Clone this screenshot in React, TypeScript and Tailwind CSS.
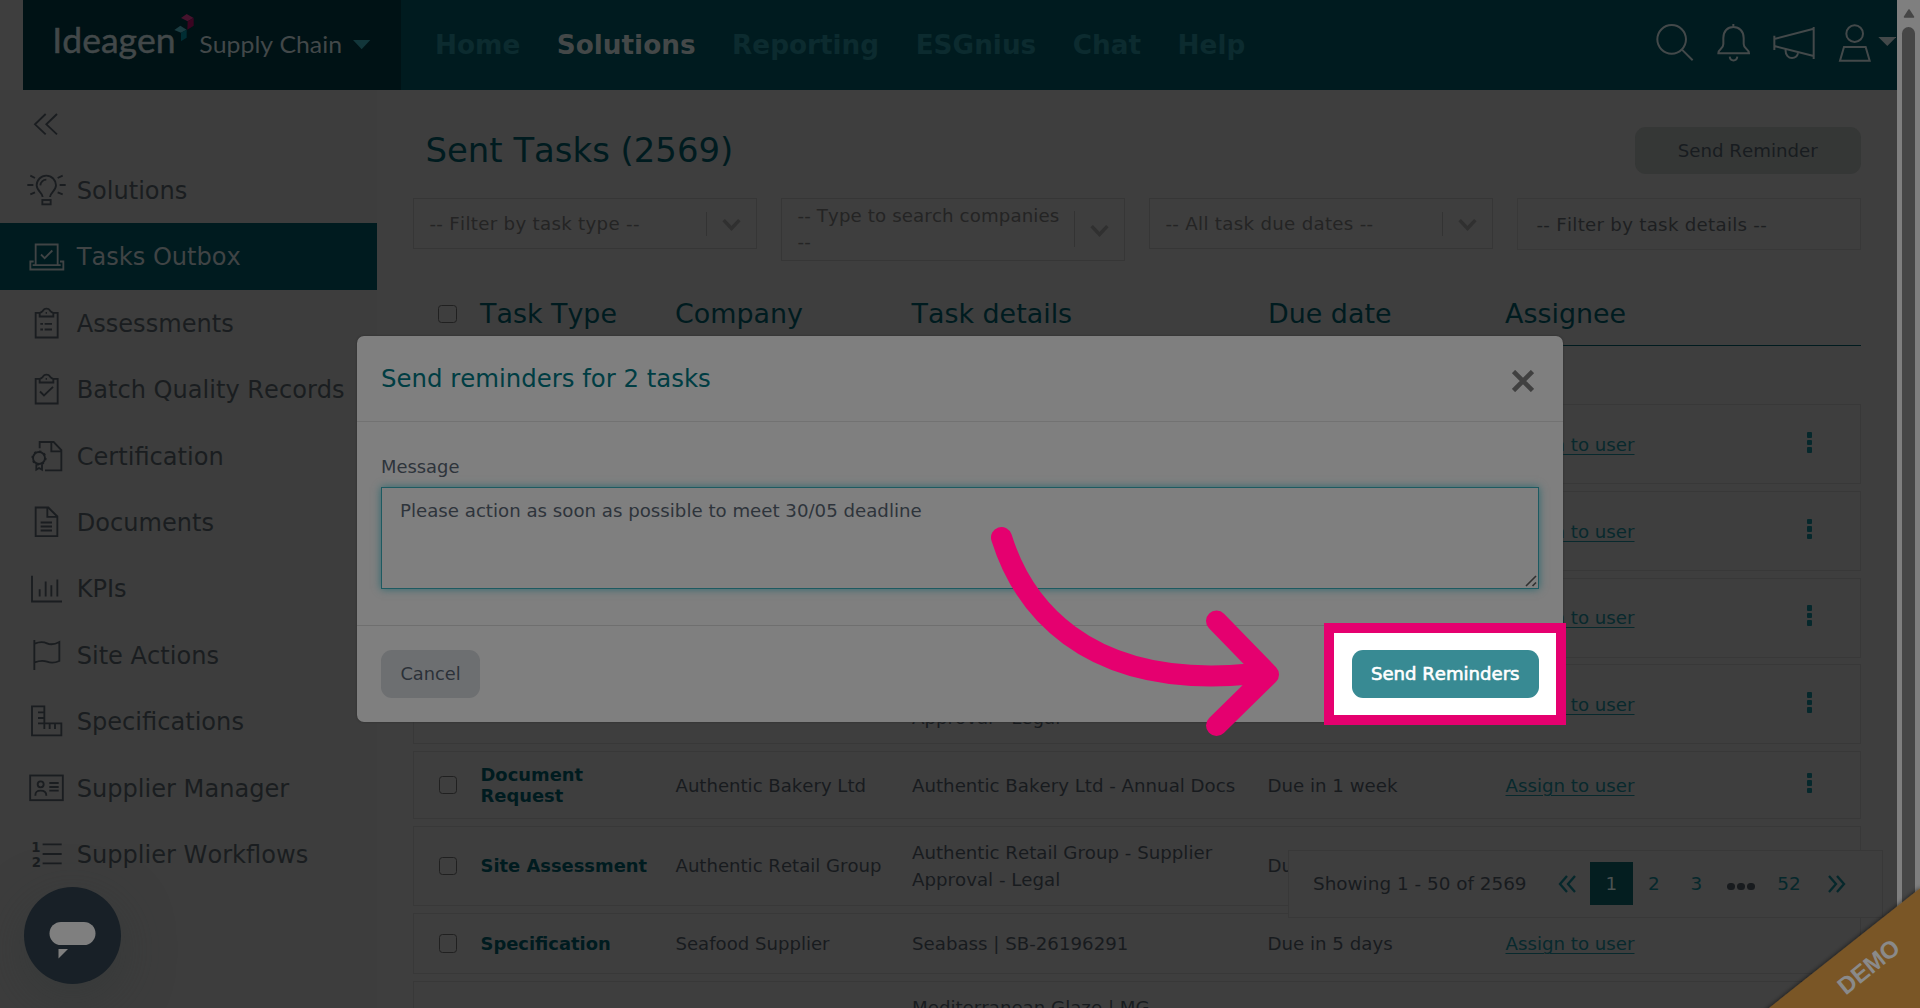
import type { ReactNode } from "react";

function Glyph({ box, w, h, children, sw = 5.5 }: { box: string; w: number; h: number; children: ReactNode; sw?: number }) {
  return (
    <svg viewBox={box} width={w} height={h} fill="none" stroke="currentColor" strokeWidth={sw} className="shrink-0">
      {children}
    </svg>
  );
}

const clip = "M118 218h-12v74h66v-74h-12M118 229v-10c4-3 8-3 11-9 3-6 16-6 19 0 3 6 7 6 11 9v10z";

const menu: { label: string; box: string; icon: ReactNode; active?: boolean }[] = [
  {
    label: "Solutions",
    box: "80 510 120 120",
    icon: (
      <>
        <path d="M127 591c0-12-18-18-18-35a29 29 0 0 1 58 0c0 17-18 23-18 35M120 556a18 18 0 0 1 18-17" />
        <path d="M81 555h18M178 555h18M90 527l14 7M172 534l15-7M90 583l14-6M172 577l15 6" />
        <rect x="126" y="600" width="25" height="13" />
      </>
    ),
  },
  {
    label: "Tasks Outbox",
    box: "80 -10.5 120 120",
    active: true,
    icon: <path d="M106 74V12h66v62M100 63H90v24h99V63h-10M97 74h84M122 42l11 11 23-23" />,
  },
  {
    label: "Assessments",
    box: "80 188.5 120 120",
    icon: (
      <>
        <path d={clip} />
        <path d="M120 251h8M120 268h8M133 251h22M133 268h22M136 218h4" />
      </>
    ),
  },
  {
    label: "Batch Quality Records",
    box: "80 188.5 120 120",
    icon: (
      <>
        <path d={clip} />
        <path d="M119 256l12 12 27-26M136 218h4" />
      </>
    ),
  },
  {
    label: "Certification",
    box: "80 587 120 120",
    icon: (
      <>
        <path d="M118 624v-19h42l23 24v61h-49M153 605v28h30M108 672v16l8-5 9 5v-16" />
        <circle cx="116" cy="653" r="18" />
        <circle cx="116" cy="653" r="20" strokeDasharray="6 9.7" />
      </>
    ),
  },
  {
    label: "Documents",
    box: "80 786.5 120 120",
    icon: <path d="M106 803h38l27 27v59h-65zM141 803v28h30M121 848h34M121 860h34M121 872h34" />,
  },
  {
    label: "KPIs",
    box: "80 25.5 120 120",
    icon: <path d="M95 46v77h90M118 86v22M136 63v45M153 74v34M171 57v51" />,
  },
  {
    label: "Site Actions",
    box: "80 225 120 120",
    icon: <path d="M102 240v90M103 251c17-7 26-6 37-1s22 4 37-4v57c-14 6-26 6-37 2s-20-4-37 2" />,
  },
  {
    label: "Specifications",
    box: "80 424 120 120",
    icon: <path d="M95 440h37v51h51v36H95zM113 458h19M113 475h19M113 491h19M132 491v17M148 491v17M164 491v17" />,
  },
  {
    label: "Supplier Manager",
    box: "80 623 120 120",
    icon: (
      <>
        <rect x="89.500" y="645.500" width="98" height="74" />
        <circle cx="121" cy="672" r="9" />
        <path d="M105 706c0-12 5-15 16-15s17 3 17 15M147 668h28M147 680h28M147 691h28" />
      </>
    ),
  },
  {
    label: "Supplier Workflows",
    box: "80 822 120 120",
    icon: (
      <>
        <path d="M127 853h57M127 882h57M127 910h57" />
        <g fill="currentColor" stroke="none" fontFamily="DejaVu Sans" fontWeight="bold" fontSize="40">
          <text x="93" y="876">1</text>
          <text x="94" y="921">2</text>
        </g>
      </>
    ),
  },
];

function Sidebar() {
  return (
    <nav className="flex w-[377px] shrink-0 flex-col bg-[#3d3d3d] text-[24.100px] text-[#1a1d20]">
      <div className="flex h-[67px] shrink-0 items-center pt-px pl-[26.700px]">
        <Glyph box="80 311 120 120" w={40} h={40}>
          <path d="M136 341l-32 31 32 30M170 341l-32 31 32 30" />
        </Glyph>
      </div>
      {menu.map((m) => (
        <div
          key={m.label}
          className={
            "flex h-[66.420px] shrink-0 items-center gap-[10px] pl-[26.700px] whitespace-nowrap " +
            (m.active ? "bg-[#001b1f] text-[#404445]" : "")
          }
        >
          <Glyph box={m.box} w={40} h={40}>{m.icon}</Glyph>
          <span className="pt-[1.500px]">{m.label}</span>
        </div>
      ))}
    </nav>
  );
}

function Logo() {
  return (
    <svg viewBox="69 0 1134 270" width="378" height="90">
      <g fontFamily="Lato" fill="#424849">
        <text x="157" y="158" fontSize="104" textLength="370" lengthAdjust="spacingAndGlyphs" stroke="#424849" strokeWidth="1.5">Ideagen</text>
        <text x="598" y="158" fontSize="72" textLength="428" lengthAdjust="spacingAndGlyphs">Supply Chain</text>
      </g>
      <path d="M560 42l21 12-18 10-20-10z" fill="#46132d" />
      <path d="M563 64l18-10v23l-19 12z" fill="#3a0521" />
      <path d="M541 77l19 12-17 9-20-8z" fill="#1b3c41" />
      <path d="M543 98l17-9v24l-17 11z" fill="#002d33" />
      <path d="M1059 120h52l-26 28z" fill="#12363a" />
    </svg>
  );
}

function Header() {
  return (
    <header className="flex h-[90px] shrink-0 pl-[23px]">
      <div className="flex flex-1 bg-[#001b1f]">
        <div className="w-[378px] bg-[#001215]">
          <Logo />
        </div>
        <div className="flex flex-1 items-center gap-[36.500px] pt-[2px] pl-[34px] text-[26.300px] font-bold text-[#0c2b2f]">
          <span>Home</span>
          <span className="text-[#444848]">Solutions</span>
          <span>Reporting</span>
          <span>ESGnius</span>
          <span>Chat</span>
          <span>Help</span>
        </div>
        <div className="flex items-center pr-px text-[#43494a]">
          <Glyph box="160 60 130 150" w={43.3} h={50} sw={6}>
            <circle cx="216" cy="118" r="43" />
            <path d="M247 149l32 32" />
          </Glyph>
          <div className="w-[18.300px]" />
          <Glyph box="345 60 110 150" w={36.7} h={50} sw={6}>
            <path d="M400 72v9M355 160c0-14 15-12 15-28v-18c0-20 12-33 30-33s31 13 31 33v18c0 16 16 14 16 28zM389 170c2 15 21 15 23 0" />
          </Glyph>
          <div className="w-[19.300px]" />
          <Glyph box="513 60 137 150" w={45.7} h={50} sw={6}>
            <path d="M523 107v43M641 81v96M523 117l118-31M523 138l118 30M557 148c-2 17 9 26 19 26s16-6 18-14" />
          </Glyph>
          <div className="w-5" />
          <Glyph box="710 60 105 150" w={35} h={50} sw={6}>
            <circle cx="763" cy="101" r="25" />
            <path d="M731 141h65l12 41h-89z" />
          </Glyph>
          <div className="w-1.5" />
          <Glyph box="833 60 55 150" w={18.3} h={50} sw={0}>
            <path d="M834 111h54l-27 27z" fill="currentColor" />
          </Glyph>
        </div>
      </div>
    </header>
  );
}

function Select({ children, tall }: { children: ReactNode; tall?: boolean }) {
  return (
    <div
      className={
        "flex items-center border-[1.500px] border-[#363636] pl-[15.500px] leading-[26.500px] text-[#242424] " +
        (tall ? "h-[62.500px] text-[18.200px] tracking-[0.120px]" : "h-[51px] text-[18.200px] tracking-[0.300px]")
      }
    >
      <span className={"flex-1 " + (tall ? "" : "pt-[2px]")}>{children}</span>
      <span className={"w-[1.500px] bg-[#333333] " + (tall ? "h-[36px]" : "h-[24px]")} />
      <svg viewBox="0 0 50 50" width="49" height="49" fill="none" stroke="#303030" strokeWidth="3.5">
        <path d="M17 21.500l8 8.500 8-8.500" />
      </svg>
    </div>
  );
}

function Check() {
  return <span className="block size-[18.500px] rounded-[3.500px] border-[1.500px] border-[#202020]" />;
}

type Task = { type?: string; company?: string; details: string; due?: string; h: string; dots?: boolean };
const retail = "Authentic Retail Group";
const approval = "Authentic Retail Group - Supplier Approval - Legal";
const tasks: Task[] = [
  { type: "Site Assessment", company: retail, details: approval, due: "Due in 1 week", h: "h-[80px]", dots: true },
  { type: "Site Assessment", company: retail, details: approval, due: "Due in 1 week", h: "h-[80px]", dots: true },
  { type: "Site Assessment", company: retail, details: approval, due: "Due in 1 week", h: "h-[80px]", dots: true },
  { type: "Site Assessment", company: retail, details: approval, due: "Due in 1 week", h: "h-[80px]", dots: true },
  { type: "Document Request", company: "Authentic Bakery Ltd", details: "Authentic Bakery Ltd - Annual Docs", due: "Due in 1 week", h: "h-[68.500px]", dots: true },
  { type: "Site Assessment", company: retail, details: approval, due: "Due in 5 days", h: "h-[80px]" },
  { type: "Specification", company: "Seafood Supplier", details: "Seabass | SB-26196291", due: "Due in 5 days", h: "h-[61.800px]" },
  { details: "Mediterranean Glaze | MG-", h: "h-[54px]" },
];

function Row({ t }: { t: Task }) {
  return (
    <div
      className={
        "grid shrink-0 grid-cols-[42px_195px_236.500px_355.500px_238px_1fr] items-center border-[1.500px] border-[#383838] pl-[24.500px] leading-[27px] text-[#181b1e] " +
        t.h
      }
    >
      {t.type ? <Check /> : <span />}
      <b className="w-[172px] text-[17.900px] leading-[21px] whitespace-normal text-[#001b1f]">{t.type}</b>
      <span className="text-[18.100px]">{t.company}</span>
      <span className="w-[328px]">{t.details}</span>
      <span>{t.due}</span>
      {t.type && (
        <span className="flex items-center">
          <span className="w-[301px] text-[#08292d] underline decoration-[1.200px] underline-offset-[2.500px]">Assign to user</span>
          {t.dots && (
            <span className="-mt-1 flex flex-col gap-[2px]">
              <i className="size-[5.500px] rounded-[1px] bg-[#06282c]" />
              <i className="size-[5.500px] rounded-[1px] bg-[#06282c]" />
              <i className="size-[5.500px] rounded-[1px] bg-[#06282c]" />
            </span>
          )}
        </span>
      )}
    </div>
  );
}

function Main() {
  return (
    <main className="flex h-[918px] flex-1 flex-col overflow-hidden pr-[36px] pl-[36px] text-[18.200px]">
      <div className="flex h-[108px] shrink-0 items-start justify-between">
        <h1 className="pt-[37px] pl-[12.500px] text-[33.900px] leading-[48px] text-[#001b1f]">Sent Tasks (2569)</h1>
        <button className="mt-[37px] h-[47px] w-[226.500px] rounded-[11px] bg-[#353736] text-[#181c20]">Send Reminder</button>
      </div>
      <div className="grid h-[62.500px] shrink-0 grid-cols-4 items-start gap-6 whitespace-nowrap">
        <Select>-- Filter by task type --</Select>
        <Select tall>-- Type to search companies<br />--</Select>
        <Select>-- All task due dates --</Select>
        <div className="flex h-[52px] items-center border-[1.500px] border-[#383838] pt-[2px] pl-[18.500px] tracking-[0.280px] text-[#1d1f21]">
          -- Filter by task details --
        </div>
      </div>
      <div className="mt-[20px] grid h-[65.800px] shrink-0 grid-cols-[42px_195px_236.500px_356.500px_237px_1fr] items-center border-b-[1.500px] border-[#001b1f] pt-[2px] pl-[25px] text-[26.900px] whitespace-nowrap text-[#001b1f]">
        <Check />
        <span>Task Type</span>
        <span>Company</span>
        <span>Task details</span>
        <span>Due date</span>
        <span>Assignee</span>
      </div>
      <div className="mt-[58.200px] flex flex-col gap-[6.600px]">
        {tasks.map((t, i) => (
          <Row key={i} t={t} />
        ))}
      </div>
    </main>
  );
}

function Pagination() {
  return (
    <div className="absolute top-[849.500px] left-[1288px] flex h-[68px] w-[595px] items-center border-[1.500px] border-[#383838] bg-[#3e3e3e] text-[18.400px] text-[#06282c]">
      <span className="w-[269px] shrink-0 pt-px pl-[24px] whitespace-nowrap text-[#181b1e]">Showing 1 - 50 of 2569</span>
      <svg viewBox="0 0 20 20" width="20" height="20" fill="none" stroke="currentColor" strokeWidth="2.3"><path d="M9 2L2 10l7 8M17 2l-7 8 7 8" /></svg>
      <span className="ml-[12px] flex h-[42.500px] w-[42.500px] items-center justify-center bg-[#041e20] pt-px text-[#4a5151]">1</span>
      <span className="w-[42.500px] pt-px text-center">2</span>
      <span className="w-[42.500px] pt-px text-center">3</span>
      <span className="flex w-[47px] items-center justify-center gap-[2.500px] pt-1.5">
        <i className="size-[7.500px] rounded-full bg-[#181b1e]" />
        <i className="size-[7.500px] rounded-full bg-[#181b1e]" />
        <i className="size-[7.500px] rounded-full bg-[#181b1e]" />
      </span>
      <span className="w-[49px] pt-px text-center">52</span>
      <svg viewBox="0 0 20 20" width="20" height="20" fill="none" stroke="currentColor" strokeWidth="2.3" className="ml-[13px]"><path d="M2 2l7 8-7 8M10 2l7 8-7 8" /></svg>
    </div>
  );
}

function Modal() {
  return (
    <section className="absolute top-[336px] left-[357px] flex h-[385.500px] w-[1206px] flex-col rounded-[7px] bg-[#7f7f7f] text-[18.180px] text-[#2e343b] shadow-[0_0_2px_#2a2a2a]">
      <div className="flex h-[86px] shrink-0 items-center justify-between border-b-[1.500px] border-[#727272] pr-[29.500px] pl-[24px]">
        <h2 className="pt-[2px] text-[24.400px] text-[#003d43]">Send reminders for 2 tasks</h2>
        <svg viewBox="0 0 22 22" width="22" height="22" stroke="#404040" strokeWidth="4.600" className="mt-1"><path d="M1.500 1.500l19 19M20.500 1.500l-19 19" /></svg>
      </div>
      <div className="flex h-[204px] shrink-0 flex-col border-b-[1.500px] border-[#6f6f6f] px-[24px] pt-[31px]">
        <label className="h-[34px] leading-[28px] text-[17.900px]">Message</label>
        <div className="relative h-[102px] border-[1.500px] border-[#1d5a61] px-[18px] pt-[8.500px] leading-[28px] shadow-[0_0_8px_#2d6a70]">
          Please action as soon as possible to meet 30/05 deadline
          <svg viewBox="0 0 12 12" width="12" height="12" stroke="#303030" strokeWidth="1.6" className="absolute right-px bottom-px"><path d="M1 11L11 1M7.500 11l3.500-3.500" /></svg>
        </div>
      </div>
      <div className="flex flex-1 items-center pl-[24px]">
        <button className="h-[47.500px] w-[99px] rounded-[11px] bg-[#6d6f71] pt-[2px] text-[17.800px] text-[#2b3138]">Cancel</button>
      </div>
    </section>
  );
}

export default function App() {
  return (
    <div className="relative flex h-[1008px] w-[1920px] overflow-hidden bg-[#3e3e3e] font-['DejaVu_Sans',Verdana,sans-serif] [font-kerning:none]">
      <div className="flex w-[1897px] flex-col">
        <Header />
        <div className="flex flex-1">
          <Sidebar />
          <Main />
        </div>
      </div>
      <div className="flex flex-1 flex-col items-center bg-[#7f7f7f] pt-[9px]">
        <svg viewBox="0 0 12 9" width="12" height="9" className="shrink-0"><path d="M6 1l4.500 7h-9z" fill="#464646" stroke="#464646" strokeWidth="1.500" strokeLinejoin="round" /></svg>
        <div className="mt-[9px] h-[1000px] w-[13px] shrink-0 rounded-t-full bg-[#464646]" />
      </div>

      <Pagination />

      <div className="absolute top-[887px] left-[24px] size-[97px] rounded-full bg-[#182027] shadow-[0_14px_50px_#30363680]">
        <svg viewBox="0 0 97 97" width="97" height="97">
          <rect x="25.500" y="35" width="46" height="23" rx="11.500" fill="#7f7f7f" />
          <path d="M34.500 62h9.500l-9.500 9.500z" fill="#7f7f7f" />
        </svg>
      </div>

      <svg viewBox="0 0 170 140" width="170" height="140" className="absolute right-0 bottom-0">
        <defs>
          <filter id="ribbon" x="-20%" y="-20%" width="140%" height="140%">
            <feDropShadow dx="0" dy="0" stdDeviation="2.500" floodColor="#000" floodOpacity="0.7" />
          </filter>
        </defs>
        <path d="M18.500 140.500L171 19.500V150H7z" fill="#7a5628" filter="url(#ribbon)" />
        <text x="118.500" y="98.500" fontFamily="Liberation Sans" fontWeight="bold" fontSize="24" fill="#8a8a8a" textAnchor="middle" dominantBaseline="central" transform="rotate(-39 118.500 98.500)">DEMO</text>
      </svg>

      <Modal />

      <div className="absolute top-[622.500px] left-[1324px] flex h-[102.500px] w-[242px] items-center justify-end border-[10px] border-[#e5006f] bg-white pr-[17px]">
        <button className="h-[47.500px] w-[187.500px] rounded-[11px] bg-[#388a93] text-[18.100px] whitespace-nowrap text-white [-webkit-text-stroke:0.600px_white]">Send Reminders</button>
      </div>

      <svg viewBox="980 520 310 230" width="310" height="230" fill="none" stroke="#e5006f" strokeWidth="21" strokeLinecap="round" strokeLinejoin="round" className="absolute top-[520px] left-[980px]">
        <path d="M1001.500 537.500C1021 600 1080 690 1250 674M1216.500 621L1268.500 674.500L1216.500 725.500" />
      </svg>
    </div>
  );
}
